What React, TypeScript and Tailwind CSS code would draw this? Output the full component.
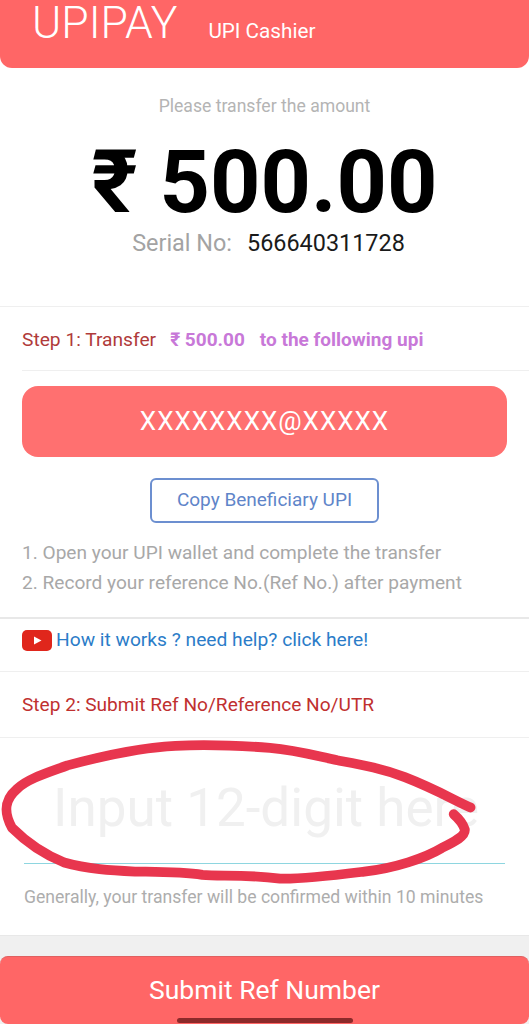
export default function App() {
  return (
    <div className="relative flex flex-col h-[1024px] w-[529px] overflow-hidden bg-white font-['Roboto',sans-serif]">
      {/* Header */}
      <div className="flex items-baseline h-[68px] pl-[32px] gap-[31px] bg-[#ff6666] rounded-b-[12px] text-white shrink-0">
        <span className="text-[44.5px] leading-[46px] font-light">UPIPAY</span>
        <span className="text-[20.7px] leading-[46px]">UPI Cashier</span>
      </div>

      {/* Amount */}
      <div className="flex flex-col items-center h-[239px] border-b border-[#efefef] shrink-0">
        <p className="mt-[28px] text-[17.6px] leading-[20px] text-[#b4b4b4]">Please transfer the amount</p>
        <p className="mt-[21px] text-[88px] leading-[90px] font-bold text-black">₹ 500.00</p>
        <p className="mt-[2px] ml-[8px] flex gap-[15px] text-[23.4px] leading-[28px]">
          <span className="text-[#a3a3a3]">Serial No:</span>
          <span className="text-[#1a1a1a]">566640311728</span>
        </p>
      </div>

      {/* Step 1 */}
      <div className="flex items-center gap-[14px] h-[64px] pt-[3px] ml-[22px] border-b border-[#efefef] text-[19.2px] shrink-0">
        <span className="text-[#b03a3a]">Step 1: Transfer</span>
        <span className="flex gap-[15px] text-[19px] font-bold text-[#c878d8]">
          <span>₹ 500.00</span>
          <span>to the following upi</span>
        </span>
      </div>

      <div className="flex flex-col items-center px-[22px] pt-[15px] h-[248px] border-b-2 border-[#e8e8e8] shrink-0">
        <div className="flex items-center justify-center w-full h-[71px] rounded-[16px] bg-[#ff7070] text-white text-[26px] tracking-[1px]">
          XXXXXXXX@XXXXX
        </div>
        <button className="mt-[21px] w-[229px] h-[45px] rounded-[6px] border-2 border-[#6c8fd0] text-[19px] text-[#5f85c9]">
          Copy Beneficiary UPI
        </button>
        <div className="mt-[15px] w-full text-[19.1px] leading-[30px] text-[#a8a8a8]">
          <p>1. Open your UPI wallet and complete the transfer</p>
          <p>2. Record your reference No.(Ref No.) after payment</p>
        </div>
      </div>

      {/* Help link */}
      <div className="flex items-center gap-[4px] h-[53px] pl-[22px] pb-[9px] border-b border-[#efefef] shrink-0">
        <svg width="30" height="21" viewBox="0 0 30 21">
          <rect width="30" height="21" rx="5" fill="#e0261c" />
          <path d="M12 6.5 L19.5 10.5 L12 14.5 Z" fill="#fff" />
        </svg>
        <span className="text-[19.2px] text-[#2b7cc8]">How it works ? need help? click here!</span>
      </div>

      {/* Step 2 */}
      <div className="flex items-center h-[66px] pt-[2px] pl-[22px] border-b border-[#efefef] text-[19.1px] text-[#c0302f] shrink-0">
        Step 2: Submit Ref No/Reference No/UTR
      </div>

      <div className="flex flex-col flex-1 px-[24px] border-b border-[#e8e8e8]">
        <input
          placeholder="Input 12-digit here"
          className="w-full h-[125px] pt-[14px] pl-[29px] text-[53px] outline-none placeholder:text-[#f0f0f0]"
        />
        <div className="h-[1px] bg-[#8ed6e0]" />
        <p className="mt-[23px] text-[17.6px] leading-[20px] text-[#adadad]">
          Generally, your transfer will be confirmed within 10 minutes
        </p>
      </div>

      {/* Submit */}
      <div className="h-[88px] pt-[20px] bg-[#f0f0f0] shrink-0">
        <button className="w-full h-[68px] pb-[2px] rounded-[8px] border-t border-[#e06060] bg-[#ff6666] text-white text-[26.5px]">
          Submit Ref Number
        </button>
      </div>

      {/* Home indicator */}
      <div className="absolute left-[177px] bottom-[1px] w-[176px] h-[5px] rounded-full bg-[#8c2a2a]" />

      {/* Hand-drawn circle over the input */}
      <svg className="absolute left-0 top-[735px] pointer-events-none" width="529" height="289" viewBox="0 0 1568 857" fill="none">
        <path
          d="M1395 215 C1340 190 1290 160 1200 125 C1130 98 1070 88 1000 75 C930 60 880 45 800 38 C720 32 600 28 520 32 C430 36 330 55 200 90 C140 112 80 130 50 160 C15 190 8 225 35 275 C70 310 120 350 190 378 C260 398 330 402 400 405 C470 406 540 405 600 415 C650 420 720 412 830 426 C900 428 1000 415 1080 405 C1170 395 1260 365 1310 335 C1350 315 1380 300 1378 280 C1372 262 1360 248 1345 235"
          stroke="#e8364e"
          strokeWidth="29"
          strokeLinecap="round"
          strokeLinejoin="round"
        />
      </svg>
    </div>
  )
}
